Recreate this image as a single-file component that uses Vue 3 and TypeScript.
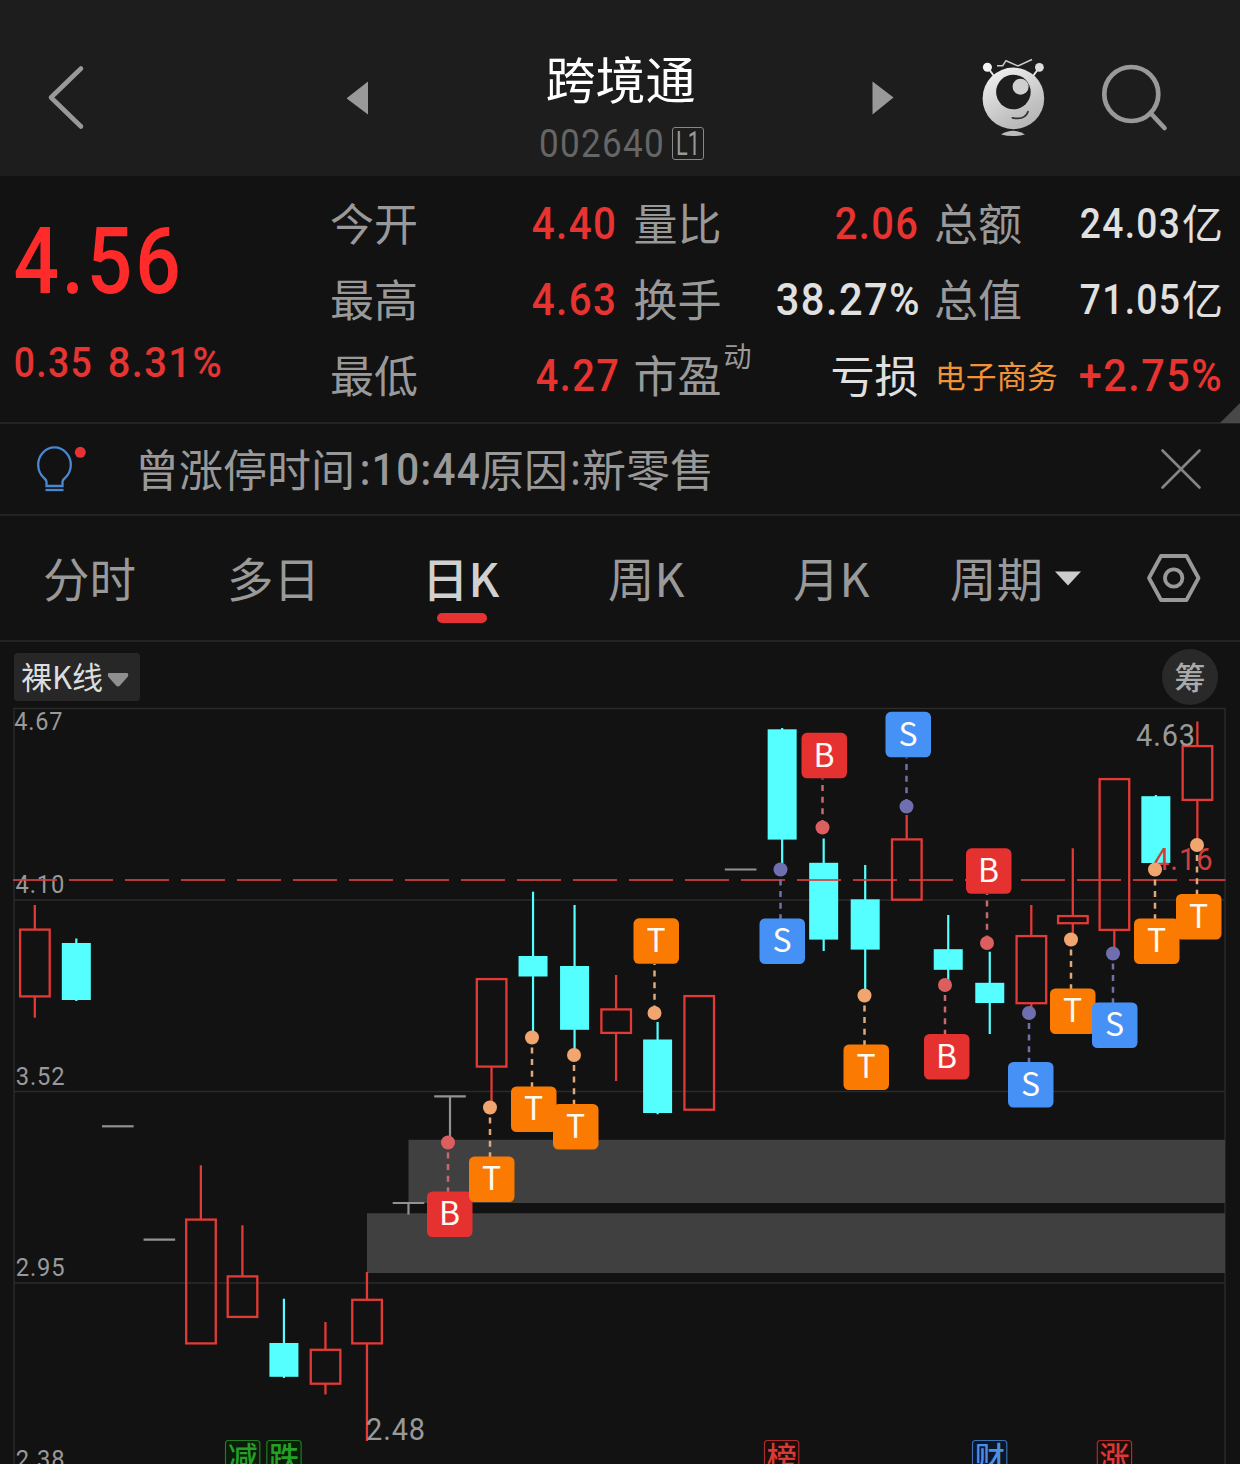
<script setup lang="ts">
import { h, type FunctionalComponent } from 'vue'

interface NumProps {
  text: string
  size: number
  width: number
  weight?: number
}

/* Figures set to a fixed ink width; the box is exactly as tall as a digit. */
const Num: FunctionalComponent<NumProps> = (p) => {
  const cap = p.size * 0.711
  const side = p.size * 0.028
  const gap = p.text.length > 2 ? p.size * 0.035 : 0
  return h(
    'svg',
    { width: p.width, height: cap, style: 'display:block;overflow:visible;flex:none' },
    [
      h(
        'text',
        {
          x: -side,
          y: cap,
          textLength: p.width + side * 2 + gap * 0.6,
          lengthAdjust: 'spacingAndGlyphs',
          fill: 'currentColor',
          'font-family': 'Roboto, sans-serif',
          'font-size': p.size,
          'font-weight': p.weight ?? 500,
          'letter-spacing': gap,
        },
        p.text,
      ),
    ],
  )
}
Num.props = ['text', 'size', 'width', 'weight']

type Kind = 'up' | 'down' | 'flat'
interface Candle {
  i: number
  kind: Kind
  high: number
  top: number
  bottom: number
  low: number
}
const c = (i: number, kind: Kind, high: number, top: number, bottom: number, low: number): Candle => ({
  i, kind, high, top, bottom, low,
})
const cx = (i: number): number => 34.8 + 41.52 * i

const candles: Candle[] = [
  c(0, 'up', 905, 928.5, 997.5, 1017.7),
  c(1, 'down', 938.5, 943, 1000, 1001),
  c(2, 'flat', 1126.3, 1126.3, 1126.3, 1126.3),
  c(3, 'flat', 1239.6, 1239.6, 1239.6, 1239.6),
  c(4, 'up', 1165.3, 1218.5, 1344.5, 1344),
  c(5, 'up', 1225.3, 1275.3, 1318, 1318),
  c(6, 'down', 1298.7, 1343, 1376.8, 1378),
  c(7, 'up', 1322, 1348.7, 1384.8, 1394.5),
  c(8, 'up', 1272, 1298.7, 1344.5, 1441),
  c(9, 'flat', 1203, 1203, 1203, 1214.5),
  c(10, 'flat', 1096.3, 1096.3, 1096.3, 1140),
  c(11, 'up', 979, 978, 1067.7, 1103),
  c(12, 'down', 891.7, 956, 976.5, 1034),
  c(13, 'down', 905, 966, 1029.8, 1050),
  c(14, 'up', 975, 1008.3, 1034, 1081),
  c(15, 'down', 1022, 1039.5, 1113, 1114.3),
  c(16, 'up', 996, 995, 1110.8, 1110),
  c(17, 'flat', 869.5, 869.5, 869.5, 869.5),
  c(18, 'down', 728, 729.3, 839.6, 866),
  c(19, 'down', 838.5, 862.8, 939.6, 951),
  c(20, 'down', 865, 899.3, 949.6, 992),
  c(21, 'up', 815, 838.3, 900.8, 900),
  c(22, 'down', 915, 949.2, 969.8, 982),
  c(23, 'down', 951.7, 982.8, 1003, 1034),
  c(24, 'up', 905, 935, 1004.3, 1010),
  c(25, 'up', 848.3, 915, 924.3, 937),
  c(26, 'up', 779, 778, 931, 950),
  c(27, 'down', 795, 796.2, 863, 864),
  c(28, 'up', 721.5, 745, 801, 842),
]

interface Signal {
  letter: 'B' | 'S' | 'T'
  x: number
  y: number
  above?: boolean
}
const signals: Signal[] = [
  { letter: 'B', x: 448, y: 1142.5 },
  { letter: 'T', x: 490, y: 1107.5 },
  { letter: 'T', x: 532, y: 1037.5 },
  { letter: 'T', x: 574, y: 1055 },
  { letter: 'T', x: 654.5, y: 1013, above: true },
  { letter: 'S', x: 780.5, y: 869.5 },
  { letter: 'B', x: 822.5, y: 827.5, above: true },
  { letter: 'T', x: 864.5, y: 995.5 },
  { letter: 'S', x: 906.5, y: 806.5, above: true },
  { letter: 'B', x: 945, y: 985 },
  { letter: 'B', x: 987, y: 943, above: true },
  { letter: 'S', x: 1029, y: 1013 },
  { letter: 'T', x: 1071, y: 939.5 },
  { letter: 'S', x: 1113, y: 953.5 },
  { letter: 'T', x: 1155, y: 869.5 },
  { letter: 'T', x: 1197, y: 845 },
]
const boxColor = { B: '#e63131', S: '#4591f6', T: '#fa7a02' }
const dotColor = { B: '#dc5f60', S: '#6f6fb0', T: '#f0a66e' }
const dashColor = { B: '#c46a6c', S: '#7070a8', T: '#e0a878' }
const boxTop = (s: Signal): number => (s.above ? s.y - 94.7 : s.y + 49)

const axis = [
  { t: '4.67', x: 15, y: 730, w: 47 },
  { t: '4.10', x: 16.3, y: 893, w: 47.5 },
  { t: '3.52', x: 16.5, y: 1085, w: 47.5 },
  { t: '2.95', x: 16.5, y: 1276, w: 47.5 },
  { t: '2.38', x: 16.5, y: 1468, w: 47.5 },
]
const tags = [
  { t: '减', x: 225.5, color: '#25a025', fill: '#0b1c0b' },
  { t: '跌', x: 266.8, color: '#25a025', fill: '#0b1c0b' },
  { t: '榜', x: 764.5, color: '#dc3834', fill: '#1c0d0d' },
  { t: '财', x: 972.5, color: '#4a90e6', fill: '#0b1626' },
  { t: '涨', x: 1097.3, color: '#dc3834', fill: '#1c0d0d' },
]
</script>

<template>
  <div class="page">
    <header class="header">
      <svg class="back" width="40" height="68" viewBox="46 63 40 68">
        <path d="M81 68.500L51 97.500L81 126.500" fill="none" stroke="#999" stroke-width="4.600" stroke-linecap="round" stroke-linejoin="round" />
      </svg>
      <svg class="prev" width="22" height="34" viewBox="347 81 22 34">
        <path d="M346.500 98.500L368 81.500V114.500Z" fill="#999" />
      </svg>
      <div class="title">
        <h1>跨境通</h1>
        <div class="code">
          <Num text="002640" :size="38.500" :width="123" :weight="400" />
          <span class="level"><Num text="L1" :size="33" :width="22" :weight="400" /></span>
        </div>
      </div>
      <svg class="next" width="22" height="34" viewBox="872 81 22 34">
        <path d="M893.500 97.500L872.500 81.500V114.500Z" fill="#999" />
      </svg>
      <svg class="mascot" width="66" height="82" viewBox="980 56 66 82">
        <defs>
          <linearGradient id="shell" x1="0.150" y1="0" x2="0.700" y2="1">
            <stop offset="0" stop-color="#f2f2f2" />
            <stop offset="0.700" stop-color="#c4c4c4" />
            <stop offset="1" stop-color="#b4b4b4" />
          </linearGradient>
        </defs>
        <g stroke="#e6e6e6" stroke-width="2" fill="none">
          <path d="M988 68L994 76M1039 68L1033 76" />
          <path d="M997 65.700H1002.700L1006 60.700L1018 66L1032 59.500" stroke-width="1.500" stroke="#ccc" />
        </g>
        <circle cx="987.400" cy="67.300" r="4.500" fill="#f4f4f4" />
        <circle cx="1039.400" cy="67.300" r="4.400" fill="#dedede" />
        <circle cx="1013.400" cy="98.400" r="30.800" fill="url(#shell)" />
        <circle cx="1013.400" cy="92" r="17.300" fill="#1d1d1d" />
        <circle cx="1020.600" cy="86.700" r="8" fill="#cfcfcf" />
        <path d="M1012.500 117.800Q1025 120.500 1028 111.800" fill="none" stroke="#333" stroke-width="1.800" stroke-linecap="round" />
        <path d="M1001 134.500Q1013 127 1025 134.500Q1013 137.500 1001 134.500Z" fill="#bbb" />
      </svg>
      <svg class="search" width="68" height="70" viewBox="1100 62 68 70">
        <g fill="none" stroke="#999" stroke-width="4.700" stroke-linecap="round">
          <circle cx="1131.300" cy="94" r="27" />
          <path d="M1150.500 113L1164.500 128" />
        </g>
      </svg>
    </header>

    <section class="quote">
      <div class="price">
        <Num class="bright" text="4.56" :size="92" :width="163" />
        <div class="change">
          <Num text="0.35" :size="43" :width="76" />
          <Num text="8.31%" :size="43" :width="112" />
        </div>
      </div>
      <div class="stats">
        <div class="cell"><span>今开</span><Num class="up v1" text="4.40" :size="45" :width="82" /></div>
        <div class="cell"><span>量比</span><Num class="up v2" text="2.06" :size="45" :width="81" /></div>
        <div class="cell"><span>总额</span><div class="amount"><Num text="24.03" :size="42.500" :width="98" /><b>亿</b></div></div>
        <div class="cell"><span>最高</span><Num class="up v1" text="4.63" :size="45" :width="82" /></div>
        <div class="cell"><span>换手</span><Num class="white" text="38.27%" :size="45" :width="142" /></div>
        <div class="cell"><span>总值</span><div class="amount"><Num text="71.05" :size="42.500" :width="98" /><b>亿</b></div></div>
        <div class="cell"><span>最低</span><Num class="up" text="4.27" :size="45" :width="81" /></div>
        <div class="cell"><span>市盈<sup>动</sup></span><span class="white">亏损</span></div>
        <div class="cell"><span class="sector">电子商务</span><Num class="up" text="+2.75%" :size="45" :width="141" /></div>
      </div>
      <svg class="corner" width="20" height="20" viewBox="0 0 20 20"><path d="M20 0V20H0Z" fill="#484848" /></svg>
    </section>

    <section class="notice">
      <svg class="bulb" width="54" height="50" viewBox="34 443 54 50">
        <g fill="none" stroke="#4a87d2" stroke-width="2.300">
          <path d="M46.500 485V480.500Q46 478.500 43.500 476.500A16.300 17.300 0 1 1 65.500 476.500Q63 478.500 62.500 480.500V485Z" />
          <path d="M45.500 489H63.500" />
        </g>
        <circle cx="80.300" cy="451.300" r="5.500" fill="#e63232" />
      </svg>
      <p>
        <span>曾涨停时间</span><Num class="n1" text=":10:44" :size="45" :width="118" /><span>原因</span><Num class="n2" text=":" :size="45" :width="7" /><span>新零售</span>
      </p>
      <svg class="close" width="42" height="42" viewBox="0 0 42 42">
        <path d="M2.500 2.500L39.500 39.500M39.500 2.500L2.500 39.500" stroke="#858585" stroke-width="2.600" stroke-linecap="round" />
      </svg>
    </section>

    <nav class="tabs">
      <span class="t1">分时</span>
      <span class="t2">多日</span>
      <span class="t3 active">日K<i></i></span>
      <span class="t4">周K</span>
      <span class="t5">月K</span>
      <span class="t6">周期</span>
      <svg class="caret" width="28" height="15" viewBox="0 0 28 15"><path d="M1 0.500H27L14 14.500Z" fill="#ccc" /></svg>
      <svg class="hex" width="56" height="52" viewBox="1146 552.500 56 52">
        <g fill="none" stroke="#999" stroke-width="3.800" stroke-linejoin="round">
          <path d="M1161 556.500H1186.500L1198.500 578.500L1186.500 600.500H1161L1149 578.500Z" />
          <circle cx="1173.700" cy="578.500" r="8.700" />
        </g>
      </svg>
    </nav>

    <div class="tools">
      <div class="mode">
        裸K线
        <svg width="22" height="14" viewBox="0 0 22 14"><path d="M1.500 0H20.500Q22 2 20.500 4L13 12.500Q11 14.500 9 12.500L1.500 4Q0 2 1.500 0Z" fill="#8f8f8f" /></svg>
      </div>
      <div class="chips">筹</div>
    </div>

    <svg class="chart" width="1240" height="757" viewBox="0 707 1240 757">
      <g stroke="#2b2b2b" stroke-width="1.400" fill="none">
        <path d="M14 1464V708.500H1225V1464M14 900H1225M14 1091.500H1225M14 1283H1225" />
      </g>
      <rect x="408.500" y="1139.800" width="816.500" height="63.200" fill="#404040" />
      <rect x="367" y="1213.300" width="858" height="59.700" fill="#404040" />

      <g class="din" fill="#999" font-size="26.500" letter-spacing="0.900">
        <text v-for="a in axis" :key="a.t" :x="a.x - 0.700" :y="a.y" :textLength="a.w + 2" lengthAdjust="spacingAndGlyphs">{{ a.t }}</text>
      </g>

      <template v-for="k in candles" :key="k.i">
        <g v-if="k.kind === 'up'" fill="none" stroke="#e23a36" stroke-width="2.300">
          <path v-if="k.high < k.top" :d="`M${cx(k.i)} ${k.high}V${k.top + 1}`" />
          <path v-if="k.low > k.bottom" :d="`M${cx(k.i)} ${k.bottom - 1}V${k.low}`" />
          <rect :x="cx(k.i) - 14.700" :y="k.top + 1.100" width="29.600" :height="k.bottom - k.top - 2.200" />
        </g>
        <g v-else-if="k.kind === 'down'" fill="#55ffff">
          <rect :x="cx(k.i) - 1.100" :y="k.high" width="2.200" :height="k.low - k.high" />
          <rect :x="cx(k.i) - 14.500" :y="k.top" width="29" :height="k.bottom - k.top" />
        </g>
        <path v-else :d="`M${cx(k.i) - 15.800} ${k.top}h31.600M${cx(k.i)} ${k.top}V${k.low}`" stroke="#929292" stroke-width="2.200" />
      </template>

      <path d="M13 880H1225.500" stroke="#d04040" stroke-opacity="0.860" stroke-width="2" stroke-dasharray="44 12" />

      <g class="din" fill="#999" font-size="31.500" letter-spacing="1">
        <text x="366" y="1439.500" textLength="60" lengthAdjust="spacingAndGlyphs">2.48</text>
        <text x="1136" y="746" textLength="60" lengthAdjust="spacingAndGlyphs">4.63</text>
        <text x="1153" y="869.500" textLength="60.500" lengthAdjust="spacingAndGlyphs" fill="#cf3f3d">4.16</text>
      </g>

      <g v-for="s in signals" :key="s.x">
        <path
          :d="s.above ? `M${s.x} ${s.y - 49}V${s.y - 5}` : `M${s.x} ${s.y + 10}V${s.y + 50}`"
          :stroke="dashColor[s.letter]"
          stroke-width="2.500"
          stroke-dasharray="6 5.600"
          :stroke-dashoffset="s.above ? 5 : 0"
        />
        <circle :cx="s.x" :cy="s.y" r="7" :fill="dotColor[s.letter]" />
        <rect :x="s.x - 21" :y="boxTop(s)" width="45.500" height="45.500" rx="5.500" :fill="boxColor[s.letter]" />
        <text class="cjk" :x="s.x + 1.500" :y="boxTop(s) + 33.700" font-size="32" fill="#fffaf2" text-anchor="middle">{{ s.letter }}</text>
      </g>

      <g v-for="g in tags" :key="g.t">
        <rect :x="g.x" y="1440.500" width="34.300" height="36" rx="3" :fill="g.fill" :stroke="g.color" stroke-opacity="0.750" stroke-width="1.200" />
        <text class="cjk" :x="g.x + 17.200" y="1467.500" font-size="30" font-weight="500" text-anchor="middle" :fill="g.color">{{ g.t }}</text>
      </g>
    </svg>
  </div>
</template>

<style>
body {
  background: #121212;
}
</style>

<style scoped>
.page {
  width: 1240px;
  height: 1464px;
  overflow: hidden;
  background: #121212;
  color: #999;
  font-family: 'Noto Sans CJK SC', sans-serif;
}
svg {
  display: block;
  flex: none;
}
.din {
  font-family: Roboto, sans-serif;
}
.cjk {
  font-family: 'Noto Sans CJK SC', sans-serif;
}
.header {
  display: flex;
  height: 176px;
  background: #1d1d1d;
}
.back {
  margin: 63px 0 0 46px;
}
.prev {
  margin: 81px 0 0 261px;
}
.title {
  width: 503px;
  display: flex;
  flex-direction: column;
  align-items: center;
}
h1 {
  margin: 47px 0 0;
  color: #fff;
  font-size: 50px;
  line-height: 60px;
  font-weight: 400;
}
.code {
  display: flex;
  align-items: center;
  gap: 9px;
  margin: 20px 0 0 2px;
  color: #666;
}
.level {
  box-sizing: border-box;
  width: 32px;
  height: 33px;
  border: 1.5px solid #888;
  border-radius: 3px;
  display: flex;
  align-items: center;
  justify-content: center;
  color: #999;
}
.next {
  margin: 81px 0 0;
}
.mascot {
  margin: 56px 0 0 86px;
}
.search {
  margin: 62px 0 0 54px;
}
.quote {
  position: relative;
  box-sizing: border-box;
  height: 248px;
  border-bottom: 2px solid #232323;
  display: flex;
}
.price {
  width: 314px;
  padding: 52px 0 0 16px;
  color: #e53533;
}
.bright {
  color: #ff2b2b;
}
.change {
  display: flex;
  gap: 18px;
  margin: 53px 0 0 -1px;
}
.stats {
  display: grid;
  grid-template-columns: 288px 285px 287px;
  grid-template-rows: repeat(3, 76px);
  column-gap: 15.5px;
  padding-top: 9px;
}
.cell {
  display: flex;
  align-items: center;
  justify-content: space-between;
  font-size: 44px;
  line-height: 76px;
}
.cell > span {
  position: relative;
  top: -1.5px;
}
.cell .v1 {
  margin-right: 3px;
}
.cell .v2 {
  margin-right: 2px;
}
.up {
  color: #e83431;
}
.white {
  color: #e0e0e0;
}
.amount {
  display: flex;
  align-items: center;
  color: #e0e0e0;
}
.amount b {
  position: relative;
  top: -2px;
  margin-left: 3px;
  margin-right: -2px;
  font-size: 41px;
  font-weight: 400;
}
sup {
  position: absolute;
  left: 90px;
  top: -19px;
  font-size: 28px;
}
.cell .sector {
  top: -0.5px;
  left: 1px;
  font-size: 30.700px;
  color: #f0933a;
}
.corner {
  position: absolute;
  right: 0;
  bottom: -1px;
}
.notice {
  box-sizing: border-box;
  height: 92px;
  border-bottom: 2px solid #232323;
  display: flex;
  align-items: center;
}
.bulb {
  margin-left: 34px;
}
.notice p {
  display: flex;
  align-items: center;
  width: 1025px;
  margin: 0 0 0 47px;
  font-size: 44px;
  line-height: 80px;
}
.notice span {
  position: relative;
  top: -1px;
}
.n1 {
  margin: 0 1px 0 6px;
}
.n2 {
  margin: 0 3px 0 4px;
}
.tabs {
  box-sizing: border-box;
  height: 126px;
  border-bottom: 2px solid #232323;
  display: flex;
  align-items: center;
  font-size: 46.500px;
  line-height: 70px;
}
.tabs > span {
  position: relative;
  top: -1px;
  flex: none;
}
.t1 { width: 184px; margin-left: 43px; }
.t2 { width: 195px; }
.t3 { width: 186px; }
.t4 { width: 185px; }
.t5 { width: 157px; }
.t6 { width: 104px; }
.active {
  color: #d0d0d0;
  font-weight: 500;
}
.active i {
  position: absolute;
  left: 15px;
  top: 71px;
  width: 50px;
  height: 10px;
  border-radius: 5px;
  background: #e63232;
}
.hex {
  margin-left: 64px;
}
.tools {
  height: 65px;
  display: flex;
  justify-content: space-between;
  align-items: flex-start;
  padding: 0 22px 0 14px;
}
.mode {
  box-sizing: border-box;
  width: 126px;
  height: 48px;
  margin-top: 11px;
  padding-left: 7px;
  border-radius: 4px;
  background: #272727;
  color: #ddd;
  font-size: 31px;
  line-height: 46px;
  display: flex;
}
.mode svg {
  margin: 20px 0 0 4px;
}
.chips {
  width: 56px;
  height: 56px;
  margin-top: 7px;
  border-radius: 50%;
  background: #292929;
  color: #aaa;
  text-align: center;
  font-size: 31px;
  font-weight: 500;
  line-height: 54px;
}
</style>
